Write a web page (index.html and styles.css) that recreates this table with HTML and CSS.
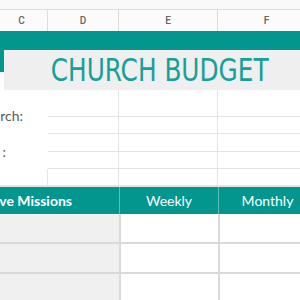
FILE: index.html
```html
<!DOCTYPE html>
<html>
<head>
<meta charset="utf-8">
<link rel="stylesheet" href="styles.css">
</head>
<body>
<div class="sheet">
  <div class="topbar"></div>
  <div class="colheads">
    <div class="ch ch-c">C</div>
    <div class="ch">D</div>
    <div class="ch">E</div>
    <div class="ch">F</div>
  </div>
  <div class="band"></div>
  <div class="titlerow">
    <div class="stripe"></div>
    <div class="titlebox"><span class="title">CHURCH BUDGET</span></div>
  </div>
  <div class="info">
    <div class="c r1 c1"></div><div class="c r1"></div><div class="c r1"></div><div class="c r1"></div>
    <div class="c r2 c1"></div><div class="c r2"></div><div class="c r2"></div><div class="c r2"></div>
    <div class="c r3 c1"></div><div class="c r3"></div><div class="c r3"></div><div class="c r3"></div>
    <div class="c r4 c1"></div><div class="c r4"></div><div class="c r4"></div><div class="c r4"></div>
    <div class="c r5 c1"></div><div class="c r5"></div><div class="c r5"></div><div class="c r5"></div>
    <div class="label lab1">Church:</div>
    <div class="label lab2">Date :</div>
  </div>
  <div class="thead">
    <div class="th th-main">Cooperative Missions</div>
    <div class="th">Weekly</div>
    <div class="th">Monthly</div>
  </div>
  <div class="rows">
    <div class="td grey"></div><div class="td"></div><div class="td"></div>
    <div class="td grey"></div><div class="td"></div><div class="td"></div>
    <div class="td grey"></div><div class="td"></div><div class="td"></div>
  </div>
</div>
</body>
</html>
```
FILE: styles.css
```css
html, body {
  margin: 0;
  padding: 0;
  overflow: hidden;
  background: #ffffff;
}
body {
  width: 300px;
  height: 300px;
  font-family: "Lato", "Liberation Sans", sans-serif;
}
.sheet {
  width: 316px;
}
.topbar {
  height: 9px;
  background: #f9f9f9;
  border-bottom: 1px solid #dcdcdc;
}
.colheads {
  display: grid;
  grid-template-columns: 48px 71px 99px 98px;
  height: 21px;
  background: #fbfbfb;
}
.ch {
  display: flex;
  align-items: center;
  justify-content: center;
  border-right: 1px solid #dcdcdc;
  font-family: "Roboto", "Liberation Sans", sans-serif;
  font-size: 10px;
  font-weight: 500;
  color: #666666;
}
.ch-c {
  padding-right: 4px;
}
.band {
  height: 19px;
  background: #03968f;
}
.titlerow {
  display: grid;
  grid-template-columns: 4px 1fr;
  height: 40px;
}
.stripe {
  height: 22px;
  background: #03968f;
}
.titlebox {
  background: #efefef;
  display: flex;
  align-items: center;
  justify-content: center;
}
.title {
  font-family: "DejaVu Sans Condensed", "DejaVu Sans", sans-serif;
  font-stretch: condensed;
  font-size: 32px;
  color: #15a09a;
  line-height: 1;
  display: inline-block;
  transform: scaleX(0.86);
}
.info {
  display: grid;
  grid-template-columns: 48px 71px 99px 98px;
  grid-template-rows: 27px 17px 18px 17px 17px;
}
.c {
  border-right: 1px solid #e4e4e4;
  border-bottom: 1px solid #e4e4e4;
}
.label {
  grid-column: 1;
  display: flex;
  justify-content: flex-end;
  white-space: nowrap;
  font-size: 14px;
  color: #5a5a5a;
}
.lab1 {
  grid-row: 1 / 3;
  align-self: center;
  padding-right: 25px;
  padding-top: 6px;
}
.lab2 {
  grid-row: 3 / 5;
  align-self: center;
  padding-right: 42px;
}
.thead {
  display: grid;
  grid-template-columns: 119px 99px 98px;
  height: 27px;
  background: #03968f;
  color: #ffffff;
  font-size: 14px;
}
.th {
  display: flex;
  align-items: center;
  justify-content: center;
  border-left: 1px solid #5cbcb7;
}
.th-main {
  justify-content: flex-end;
  padding-right: 47px;
  font-weight: 700;
  white-space: nowrap;
  border-left: none;
}
.rows {
  display: grid;
  grid-template-columns: 119px 99px 98px;
  grid-auto-rows: 30px;
}
.td {
  border-bottom: 2px solid #d9d9d9;
  border-left: 2px solid #dadada;
}
.td.grey {
  background: #f0f0f0;
  border-left: none;
}
```
